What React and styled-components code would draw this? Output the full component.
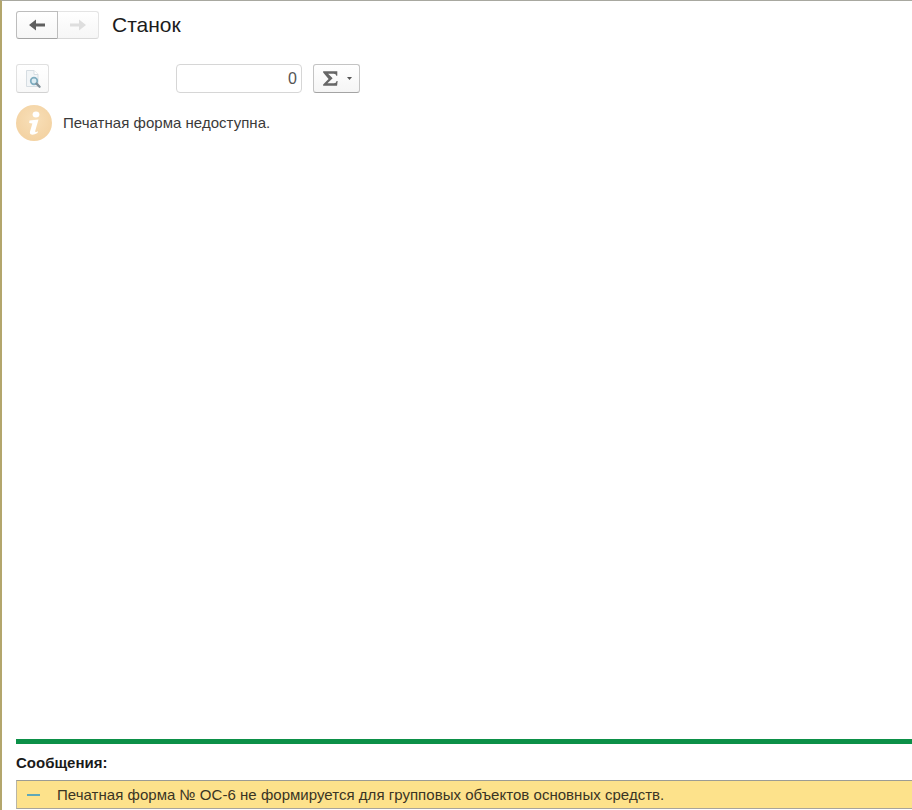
import React from "react";
import styled, { createGlobalStyle } from "styled-components";

const Global = createGlobalStyle`
  html, body { margin: 0; padding: 0; background: #fff; }
  body { font-family: "Liberation Sans", Arial, sans-serif; color: #333; overflow: hidden; }
`;

const Page = styled.div`
  width: 912px;
  height: 810px;
  box-sizing: border-box;
  border-top: 1px solid #a8a8a0;
  border-left: 2px solid #b3a66c;
  padding: 10px 0 0 14px;
  display: flex;
  flex-direction: column;
  overflow: hidden;
`;

const Header = styled.div`
  display: flex;
  align-items: center;
  height: 28px;
`;

const NavGroup = styled.div`
  display: flex;
  height: 28px;
  box-sizing: border-box;
`;

const NavButton = styled.div`
  width: ${(p) => p.$w}px;
  height: 28px;
  box-sizing: border-box;
  display: flex;
  align-items: center;
  justify-content: center;
  border: 1px solid ${(p) => (p.$active ? "#bdbdbd" : "#e4e4e4")};
  border-bottom-color: ${(p) => (p.$active ? "#a4a4a4" : "#d8d8d8")};
  border-left-width: ${(p) => (p.$active ? 1 : 0)}px;
  border-radius: ${(p) => (p.$active ? "3px 0 0 3px" : "0 3px 3px 0")};
  background: linear-gradient(#ffffff, #f6f6f6);
`;

const Title = styled.h1`
  margin: 0 0 0 13px;
  font-size: 21px;
  font-weight: 400;
  color: #1c1c1c;
  line-height: 28px;
`;

const Toolbar = styled.div`
  display: flex;
  align-items: center;
  height: 29px;
  margin-top: 25px;
`;

const PreviewButton = styled.div`
  width: 33px;
  height: 29px;
  box-sizing: border-box;
  display: flex;
  align-items: center;
  justify-content: center;
  border: 1px solid #e0e0e0;
  border-bottom-color: #d2d2d2;
  border-radius: 3px;
  background: linear-gradient(#ffffff, #f8f8f8);
`;

const NumberField = styled.div`
  width: 126px;
  height: 29px;
  margin-left: 127px;
  box-sizing: border-box;
  border: 1px solid #d6d6d6;
  border-radius: 4px;
  background: #fff;
  font-size: 16px;
  line-height: 27px;
  text-align: right;
  padding-right: 4px;
  color: #555;
`;

const SumButton = styled.div`
  width: 47px;
  height: 29px;
  margin-left: 11px;
  box-sizing: border-box;
  display: flex;
  align-items: center;
  padding-left: 8px;
  gap: 8px;
  border: 1px solid #c4c4c4;
  border-bottom-color: #a4a4a4;
  border-radius: 3px;
  background: linear-gradient(#ffffff, #f5f5f5);
`;

const InfoRow = styled.div`
  display: flex;
  align-items: center;
  margin-top: 12px;
  height: 36px;
`;

const InfoText = styled.span`
  margin: 0 0 2px 11px;
  font-size: 15px;
  letter-spacing: 0.03px;
  color: #3a3a3a;
`;

const Spacer = styled.div`
  flex: 1;
`;

const Divider = styled.div`
  height: 5px;
  background: #0c9048;
`;

const MessagesLabel = styled.div`
  margin-top: 10px;
  height: 18px;
  font-size: 15px;
  line-height: 18px;
  font-weight: 700;
  color: #1a1a1a;
`;

const MessageBar = styled.div`
  margin-top: 8px;
  margin-bottom: 1px;
  height: 29px;
  box-sizing: border-box;
  display: flex;
  align-items: center;
  background: #fde28b;
  border-top: 1px solid #9c9c94;
  border-bottom: 1px solid #a8a49a;
  border-left: 1px solid #b9b5a5;
  font-size: 15px;
  letter-spacing: 0.03px;
  color: #3a3524;
`;

const Dash = styled.span`
  width: 13px;
  height: 2px;
  margin-left: 10px;
  background: #5fa8b8;
  flex: none;
`;

const MessageText = styled.span`
  margin-left: 17px;
  white-space: nowrap;
`;

const Arrow = ({ color, flip }) => (
  <svg width="18" height="14" viewBox="0 0 18 14" style={flip ? { transform: "scaleX(-1)" } : undefined}>
    <path d="M1 7 L8 1.5 V5.5 H17 V8.5 H8 V12.5 Z" fill={color} />
  </svg>
);

const DocIcon = () => (
  <svg width="20" height="22" viewBox="0 0 20 22">
    <path d="M3.5 2.5 H11 L15 6.5 V18.5 H3.5 Z" fill="#f2f5f7" stroke="#d6dde2" />
    <path d="M11 2.5 V6.5 H15" fill="#fff" stroke="#d6dde2" />
    <circle cx="11" cy="13" r="3.3" fill="#dcecf3" stroke="#7fadc0" strokeWidth="1.7" />
    <path d="M13.5 15.6 L16.6 18.7" stroke="#7e8f99" strokeWidth="2.3" strokeLinecap="round" />
  </svg>
);

const SigmaIcon = () => (
  <svg width="17" height="17" viewBox="0 0 15 15">
    <path d="M1 1 H13.5 V5 H12.6 Q12.4 3.2 10.4 3.2 H5.4 L9.4 7.3 L4.8 11.8 H10.6 Q12.6 11.8 12.9 9.6 H13.8 L13.3 14 H1 V12.9 L5.8 7.9 L1 2.2 Z" fill="#666" />
  </svg>
);

const Caret = () => (
  <svg width="5" height="3" viewBox="0 0 5 3">
    <path d="M0 0 H5 L2.5 3 Z" fill="#555" />
  </svg>
);

const InfoIcon = () => (
  <svg width="36" height="36" viewBox="0 0 36 36">
    <defs>
      <radialGradient id="infoFill" cx="50%" cy="40%" r="60%">
        <stop offset="0%" stopColor="#f8dfb8" />
        <stop offset="100%" stopColor="#f3d2a2" />
      </radialGradient>
    </defs>
    <circle cx="18" cy="18" r="18" fill="url(#infoFill)" />
    <ellipse cx="20" cy="9.5" rx="3.4" ry="3" fill="#fff" />
    <path d="M13.5 15.5 L22.5 14.5 L19.2 26 Q19 27.4 20.2 27 L22 26.2 L21.5 28 Q18 30 15.5 29.6 Q13.4 29.2 14 26.6 L16.4 18.4 L13.2 18 Z" fill="#fff" />
  </svg>
);

export default function App() {
  return (
    <Page>
      <Global />
      <Header>
        <NavGroup>
          <NavButton $w={42} $active>
            <Arrow color="#5f5f5f" />
          </NavButton>
          <NavButton $w={41}>
            <Arrow color="#dedede" flip />
          </NavButton>
        </NavGroup>
        <Title>Станок</Title>
      </Header>
      <Toolbar>
        <PreviewButton>
          <DocIcon />
        </PreviewButton>
        <NumberField>0</NumberField>
        <SumButton>
          <SigmaIcon />
          <Caret />
        </SumButton>
      </Toolbar>
      <InfoRow>
        <InfoIcon />
        <InfoText>Печатная форма недоступна.</InfoText>
      </InfoRow>
      <Spacer />
      <Divider />
      <MessagesLabel>Сообщения:</MessagesLabel>
      <MessageBar>
        <Dash />
        <MessageText>Печатная форма № ОС-6 не формируется для групповых объектов основных средств.</MessageText>
      </MessageBar>
    </Page>
  );
}
